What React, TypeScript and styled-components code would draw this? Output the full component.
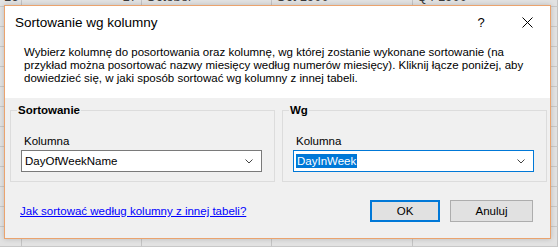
import React from 'react';
import styled, { createGlobalStyle } from 'styled-components';

const GlobalStyle = createGlobalStyle`
  html, body {
    margin: 0;
    padding: 0;
  }
  body {
    background: #d4d4d4;
    font-family: 'Liberation Sans', Arial, sans-serif;
    overflow: hidden;
  }
`;

const Page = styled.div`
  position: relative;
  width: 558px;
  height: 247px;
  overflow: hidden;
  background: #d4d4d4;
`;

// spreadsheet behind the dialog
const Sheet = styled.div`
  display: grid;
  grid-template-columns: 22px 120px 130px 141px 1fr;
  grid-auto-rows: 20px;
  margin-top: -13px;
`;

const Cell = styled.div<{ $align?: 'left' | 'right' }>`
  background: #e2e2e2;
  border-right: 1px solid #c3c3c3;
  border-bottom: 1px solid #c8c8c8;
  font-size: 13px;
  line-height: 20px;
  color: #3a3a3a;
  padding: 0 4px;
  text-align: ${p => p.$align ?? 'left'};
  white-space: nowrap;
  overflow: hidden;
`;

const Dialog = styled.div`
  position: absolute;
  left: 4px;
  top: 5px;
  width: 547px;
  height: 234px;
  box-sizing: border-box;
  border: 1px solid #eaa36e;
  background: #f0f0f0;
  display: flex;
  flex-direction: column;
  box-shadow: 0 0 5px rgba(0, 0, 0, 0.18);
`;

const TitleBar = styled.div`
  height: 32px;
  background: #fff;
  display: flex;
  align-items: center;
  padding-left: 10px;
`;

const Title = styled.div`
  flex: 1;
  font-size: 13.5px;
  color: #000;
`;

const CaptionButton = styled.div`
  width: 46px;
  height: 32px;
  display: flex;
  align-items: center;
  justify-content: center;
  font-size: 13px;
  color: #000;
`;

const Description = styled.div`
  background: #fff;
  height: 60px;
  box-sizing: border-box;
  padding: 8px 10px 0 19px;
  font-size: 11.5px;
  line-height: 13px;
  color: #000;
  white-space: nowrap;
`;

const Body = styled.div`
  flex: 1;
  display: flex;
  flex-direction: column;
  padding: 5px 4px 0 5px;
`;

const Groups = styled.div`
  display: grid;
  grid-template-columns: 265px 265px;
  gap: 7px;
`;

const Group = styled.fieldset`
  margin: 0;
  border: 1px solid #dcdcdc;
  padding: 0 12px 9px 10px;
  min-width: 0;
`;

const Legend = styled.legend`
  margin-left: -4px;
  padding: 0 1px;
  font-size: 11.5px;
  font-weight: bold;
  line-height: 15px;
  color: #000;
`;

const Label = styled.div`
  margin: 16px 0 1px 3px;
  font-size: 11.5px;
  line-height: 15px;
  color: #000;
`;

const Combo = styled.div<{ $focused?: boolean }>`
  height: 22px;
  box-sizing: border-box;
  border: 1px solid ${p => (p.$focused ? '#0078d7' : '#7a7a7a')};
  background: #fff;
  display: flex;
  align-items: center;
  padding: 0 8px 0 2px;
  font-size: 11.5px;
  color: #000;
`;

const ComboText = styled.span<{ $selected?: boolean }>`
  flex: 1;
  span {
    padding: 1px 1px;
    background: ${p => (p.$selected ? '#0078d7' : 'transparent')};
    color: ${p => (p.$selected ? '#fff' : '#000')};
  }
`;

const Footer = styled.div`
  flex: 1;
  display: flex;
  align-items: center;
  padding: 2px 13px 0 10px;
`;

const Link = styled.a`
  flex: 1;
  font-size: 11.5px;
  color: #0000ff;
  text-decoration: underline;
  cursor: pointer;
`;

const Button = styled.button<{ $primary?: boolean; $width: number }>`
  width: ${p => p.$width}px;
  height: 22px;
  margin-left: 10px;
  box-sizing: border-box;
  border: ${p => (p.$primary ? '2px solid #0078d7' : '1px solid #adadad')};
  background: #e1e1e1;
  font-family: 'Liberation Sans', Arial, sans-serif;
  font-size: 11.5px;
  color: #000;
  padding: 0;
`;

function Chevron() {
  return (
    <svg width="8" height="5" viewBox="0 0 8 5">
      <polyline points="0.5,0.5 4,4 7.5,0.5" fill="none" stroke="#444" strokeWidth="1" />
    </svg>
  );
}

function CloseIcon() {
  return (
    <svg width="11" height="11" viewBox="0 0 11 11">
      <path d="M0.5 0.5 L10.5 10.5 M10.5 0.5 L0.5 10.5" stroke="#000" strokeWidth="1" />
    </svg>
  );
}

const rows = [
  ['16', '17', 'October', 'Oct 1900', 'Q4 1900'],
  ...Array.from({ length: 13 }, () => ['', '', '', '', '']),
];

export default function App() {
  return (
    <Page>
      <GlobalStyle />
      <Sheet>
        {rows.map((r, i) =>
          r.map((c, j) => (
            <Cell key={`${i}-${j}`} $align={j === 1 ? 'right' : 'left'}>
              {c}
            </Cell>
          )),
        )}
      </Sheet>
      <Dialog>
        <TitleBar>
          <Title>Sortowanie wg kolumny</Title>
          <CaptionButton>?</CaptionButton>
          <CaptionButton>
            <CloseIcon />
          </CaptionButton>
        </TitleBar>
        <Description>
          Wybierz kolumnę do posortowania oraz kolumnę, wg której zostanie wykonane sortowanie (na
          <br />
          przykład można posortować nazwy miesięcy według numerów miesięcy). Kliknij łącze poniżej, aby
          <br />
          dowiedzieć się, w jaki sposób sortować wg kolumny z innej tabeli.
        </Description>
        <Body>
          <Groups>
            <Group>
              <Legend>Sortowanie</Legend>
              <Label>Kolumna</Label>
              <Combo>
                <ComboText>
                  <span>DayOfWeekName</span>
                </ComboText>
                <Chevron />
              </Combo>
            </Group>
            <Group>
              <Legend>Wg</Legend>
              <Label>Kolumna</Label>
              <Combo $focused>
                <ComboText $selected>
                  <span>DayInWeek</span>
                </ComboText>
                <Chevron />
              </Combo>
            </Group>
          </Groups>
          <Footer>
            <Link>Jak sortować według kolumny z innej tabeli?</Link>
            <Button $primary $width={70}>
              OK
            </Button>
            <Button $width={83}>Anuluj</Button>
          </Footer>
        </Body>
      </Dialog>
    </Page>
  );
}
